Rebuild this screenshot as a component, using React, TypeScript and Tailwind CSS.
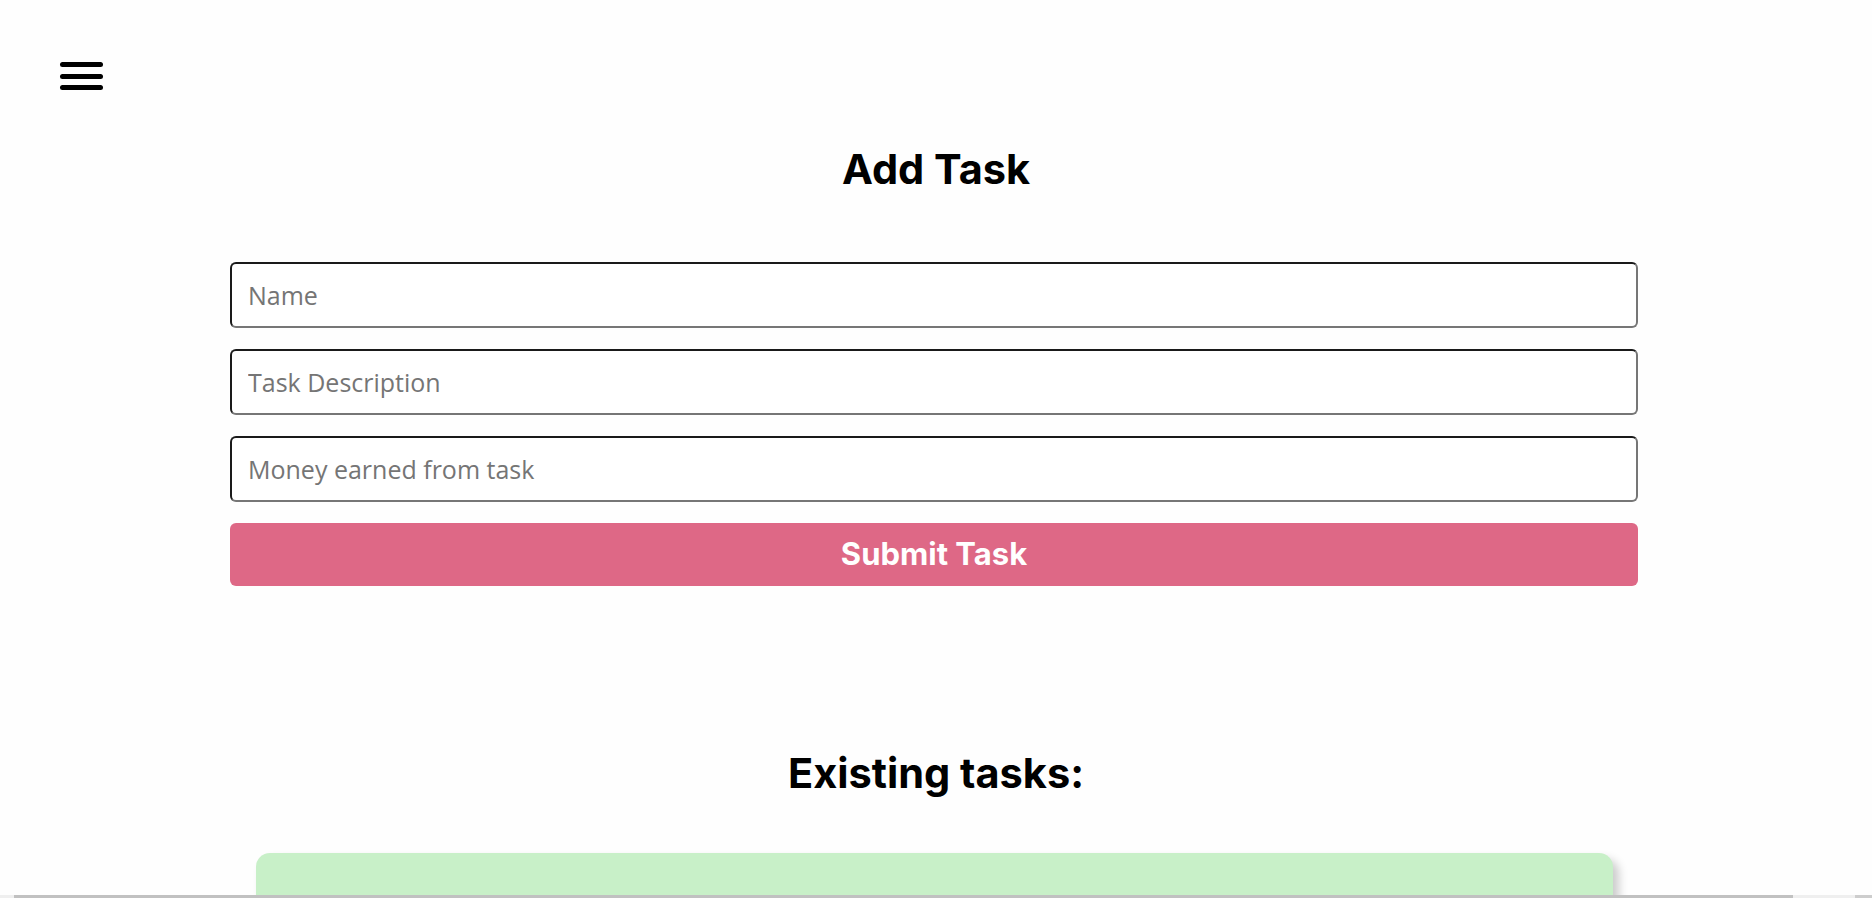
const fields = ['Name', 'Task Description', 'Money earned from task']

function MenuIcon() {
  return (
    <button className="flex h-[28px] w-[43px] flex-col justify-between">
      <span className="h-[5px] w-full rounded-full bg-black" />
      <span className="h-[5px] w-full rounded-full bg-black" />
      <span className="h-[5px] w-full rounded-full bg-black" />
    </button>
  )
}

export default function App() {
  return (
    <div className="relative h-screen overflow-hidden bg-[#fefefe] font-['Inter',sans-serif] text-black">
      <header className="pl-[60px] pt-[62px]">
        <MenuIcon />
      </header>

      <h1 className="mt-[59px] text-center text-[41.5px] font-bold leading-none">Add Task</h1>

      <form className="ml-[230px] mt-[71px] flex w-[1408px] flex-col gap-[21px]">
        {fields.map((f) => (
          <input
            key={f}
            placeholder={f}
            className="h-[66px] rounded-[6px] border-2 border-b-[#767676] border-l-[#1a1a1a] border-r-[#767676] border-t-[#1a1a1a] bg-white px-[16px] font-['Open_Sans',sans-serif] text-[25px] outline-none placeholder:text-[#757575]"
          />
        ))}
        <button
          type="button"
          className="h-[63px] rounded-[6px] bg-[#de6886] text-[31px] font-bold text-white"
        >
          Submit Task
        </button>
      </form>

      <h2 className="mt-[167px] text-center text-[41.5px] font-bold leading-none">Existing tasks:</h2>

      <div className="ml-[256px] mt-[59px] h-[200px] w-[1357px] rounded-[14px] bg-[#c8f0c8] shadow-[6px_6px_10px_rgba(0,0,0,0.2)]" />

      <div className="absolute bottom-0 left-0 right-0 flex h-[3px] bg-[#efefef]">
        <div className="ml-[14px] w-[1779px] bg-[#c1c1c1]" />
        <div className="ml-auto w-[17px] bg-[#cdcdcd]" />
      </div>
    </div>
  )
}
